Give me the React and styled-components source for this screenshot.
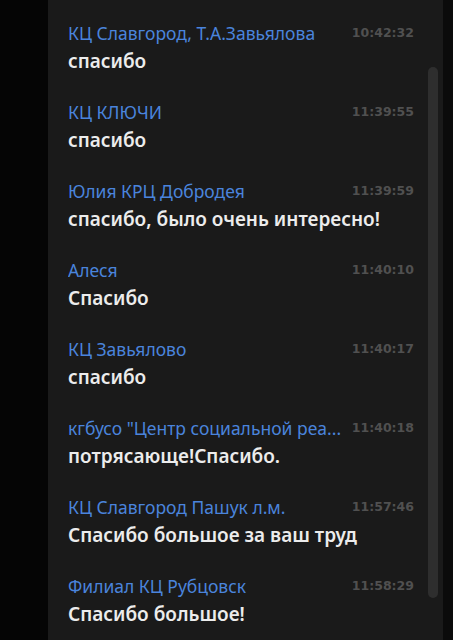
import React from 'react'
import styled, { createGlobalStyle } from 'styled-components'

const messages = [
    { name: 'КЦ Славгород, Т.А.Завьялова', time: '10:42:32', text: 'спасибо' },
    { name: 'КЦ КЛЮЧИ', time: '11:39:55', text: 'спасибо' },
    { name: 'Юлия КРЦ Добродея', time: '11:39:59', text: 'спасибо, было очень интересно!' },
    { name: 'Алеся', time: '11:40:10', text: 'Спасибо' },
    { name: 'КЦ Завьялово', time: '11:40:17', text: 'спасибо' },
    { name: 'кгбусо "Центр социальной реа...', time: '11:40:18', text: 'потрясающе!Спасибо.' },
    { name: 'КЦ Славгород Пашук л.м.', time: '11:57:46', text: 'Спасибо большое за ваш труд' },
    { name: 'Филиал КЦ Рубцовск', time: '11:58:29', text: 'Спасибо большое!' },
]

const App = () => {
    return (
        <>
            <Global />
            <Screen>
                <SideStrip />
                <ChatPanel>
                    <List>
                        {messages.map((m, idx) => (
                            <Message key={idx}>
                                <Head>
                                    <Author>{m.name}</Author>
                                    <Time>{m.time}</Time>
                                </Head>
                                <Text>{m.text}</Text>
                            </Message>
                        ))}
                    </List>
                    <ScrollThumb />
                </ChatPanel>
                <EdgeStrip />
            </Screen>
        </>
    )
}

const Global = createGlobalStyle`
    html, body {
        margin: 0;
        padding: 0;
        background: #0b0b0b;
    }
    * {
        box-sizing: border-box;
    }
`

const Screen = styled.div`
    display: flex;
    width: 453px;
    height: 640px;
    overflow: hidden;
`

const SideStrip = styled.div`
    width: 48px;
    flex-shrink: 0;
    background: #050505;
`

const EdgeStrip = styled.div`
    width: 10px;
    flex-shrink: 0;
    background: #0b0b0b;
`

const ChatPanel = styled.div`
    position: relative;
    flex: 1;
    background: #1a1a1a;
    overflow: hidden;
`

const List = styled.div`
    display: flex;
    flex-direction: column;
    padding: 11px 29px 0 20px;
`

const Message = styled.div`
    padding: 11px 0 14px;
`

const Head = styled.div`
    display: flex;
    align-items: center;
    gap: 6px;
    height: 22px;
`

const Author = styled.div`
    flex: 1;
    min-width: 0;
    white-space: nowrap;
    overflow: hidden;
    text-overflow: ellipsis;
    font-family: "Noto Sans", "Open Sans", sans-serif;
    font-size: 17.5px;
    line-height: 22px;
    color: #4a84dc;
`

const Time = styled.div`
    flex-shrink: 0;
    font-family: "DejaVu Sans", sans-serif;
    font-weight: bold;
    font-size: 12.5px;
    line-height: 22px;
    color: #505050;
`

const Text = styled.div`
    margin-top: 2px;
    font-family: "Noto Sans", "Open Sans", sans-serif;
    font-weight: 600;
    font-size: 19px;
    line-height: 30px;
    color: #ececec;
`

const ScrollThumb = styled.div`
    position: absolute;
    top: 67px;
    left: 380px;
    width: 10px;
    height: 531px;
    border-radius: 5px;
    background: #2e2e2e;
`

export default App
